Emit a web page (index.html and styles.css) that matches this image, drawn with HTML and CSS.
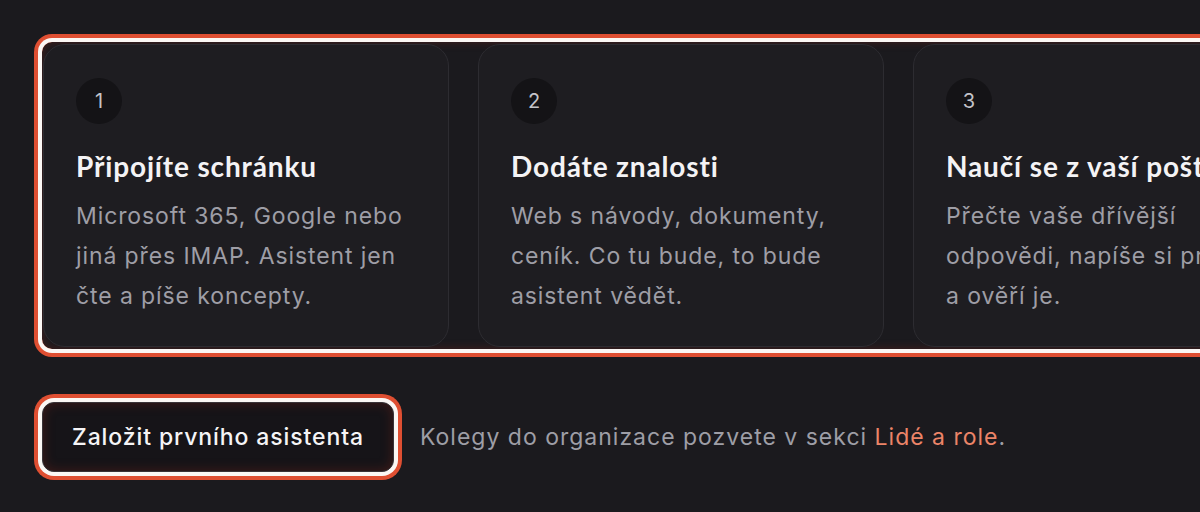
FILE: index.html
```html
<!DOCTYPE html>
<html lang="cs">
<head>
<meta charset="utf-8">
<title>Kroky</title>
<link rel="stylesheet" href="styles.css">
</head>
<body>
<main class="page">
  <section class="steps">
    <article class="card">
      <div class="badge">1</div>
      <h3 class="title">Připojíte schránku</h3>
      <p class="text">Microsoft 365, Google nebo jiná přes IMAP. Asistent jen čte a píše koncepty.</p>
    </article>
    <article class="card">
      <div class="badge">2</div>
      <h3 class="title">Dodáte znalosti</h3>
      <p class="text">Web s návody, dokumenty, ceník. Co tu bude, to bude asistent vědět.</p>
    </article>
    <article class="card">
      <div class="badge">3</div>
      <h3 class="title">Naučí se z vaší pošty</h3>
      <p class="text">Přečte vaše dřívější odpovědi, napíše si pravidla a ověří je.</p>
    </article>
  </section>
  <div class="actions">
    <button class="btn" type="button">Založit prvního asistenta</button>
    <p class="note">Kolegy do organizace pozvete v sekci <a class="link" href="#">Lidé a role</a>.</p>
  </div>
</main>
</body>
</html>
```
FILE: styles.css
```css
html, body {
  margin: 0;
  padding: 0;
  background: #1b1a1e;
  overflow: hidden;
  width: 1200px;
  height: 512px;
}
.page {
  padding: 42px 0 0 42px;
  font-family: Inter, "Noto Sans", sans-serif;
}
.steps {
  display: flex;
  gap: 29px;
  padding: 2px 1px;
  width: max-content;
  border-radius: 10px;
  box-shadow: 0 0 0 4px #fbf7f4, 0 0 0 8px #df4f32, inset 0 0 10px rgba(150, 40, 25, 0.35);
}
.card {
  flex: 0 0 auto;
  box-sizing: border-box;
  width: 406px;
  height: 303px;
  padding: 33px 32px 0 32px;
  background: #1e1d21;
  border: 1px solid #2d2c31;
  border-radius: 22px;
}
.badge {
  width: 46px;
  height: 46px;
  border-radius: 50%;
  background: #141316;
  color: #c4c4c9;
  font-size: 20px;
  display: flex;
  align-items: center;
  justify-content: center;
}
.title {
  margin: 24px 0 0 0;
  font-family: Lato, "Noto Sans", sans-serif;
  font-weight: 700;
  font-size: 28px;
  line-height: 36px;
  letter-spacing: 0.85px;
  color: #f4f3f5;
  white-space: nowrap;
}
.text {
  margin: 12px 0 0 0;
  font-size: 23px;
  line-height: 40px;
  letter-spacing: 0.9px;
  color: #9e9ea6;
}
.actions {
  display: flex;
  align-items: center;
  gap: 26px;
  margin-top: 53px;
}
.btn {
  height: 70px;
  padding: 0 29px;
  background: #161418;
  border: 1px solid #3a3438;
  border-radius: 12px;
  color: #f5f4f6;
  font-family: Inter, "Noto Sans", sans-serif;
  font-size: 23px;
  font-weight: 500;
  letter-spacing: 0.9px;
  box-shadow: 0 0 0 4px #fbf7f4, 0 0 0 8px #df4f32, inset 0 0 12px rgba(150, 40, 25, 0.35);
}
.note {
  margin: 0;
  font-size: 23px;
  letter-spacing: 1px;
  color: #9e9ea6;
}
.link {
  color: #ec8468;
  text-decoration: none;
}
```
